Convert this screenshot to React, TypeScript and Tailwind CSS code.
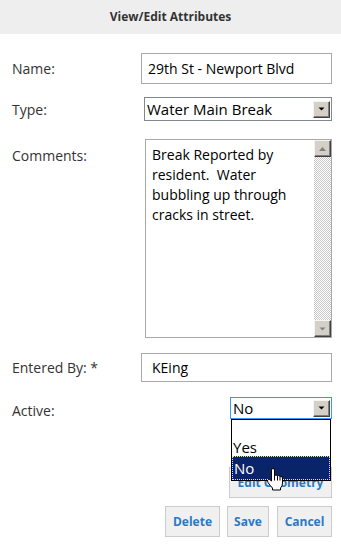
import React from "react";

function ArrowBtn({ up = false, disabled = false }: { up?: boolean; disabled?: boolean }) {
  return (
    <div className="w-[17px] h-[17px] bg-[#d4d0c8] border-t border-l border-t-[#f4f4f4] border-l-[#f4f4f4] border-r border-b border-r-[#404040] border-b-[#404040] shadow-[inset_-1px_-1px_0_#808080] flex items-center justify-center shrink-0">
      <svg width="9" height="6" viewBox="0 0 9 6">
        {up ? (
          <polygon points="1,5 8,5 4.5,1" fill={disabled ? "#808080" : "#000"} />
        ) : (
          <polygon points="1.5,1.5 7.5,1.5 4.5,4.5" fill={disabled ? "#808080" : "#000"} />
        )}
      </svg>
    </div>
  );
}

function SelectBox({ value, w, focused = false, h }: { value: string; w: string; focused?: boolean; h: string }) {
  return (
    <div
      className={`${w} ${h} ml-auto flex items-center border ${focused ? "border-[#3399ff]" : "border-[#828790]"} bg-white pl-[2px] pr-[1px]`}
    >
      <span className="flex-1 text-[15px] text-[#000] leading-none pt-[1px]">{value}</span>
      <ArrowBtn />
    </div>
  );
}

function Hand() {
  return (
    <svg width="18" height="23" viewBox="0 0 18 23" className="absolute left-[266px] top-[468px]">
      <path
        d="M5.5,2 Q5.5,0.5 7,0.5 Q8.5,0.5 8.5,2 V8 Q8.5,7 10,7 Q11.5,7 11.5,8.5 Q11.5,7.5 12.8,7.5 Q14,7.5 14,9 Q14,8.5 15,8.5 Q16.5,8.5 16.5,10 V15 Q16.5,18 14.5,20 V22 H6.5 V20 Q4,17.5 2,14.5 Q0.8,12.3 2.5,11.5 Q3.8,11 5.5,13 Z"
        fill="#fff"
        stroke="#000"
        strokeWidth="1"
      />
      <path d="M8.5,8 V12.5 M11.5,8.5 V12.5 M14,9 V12.5" stroke="#000" strokeWidth="1" fill="none" />
    </svg>
  );
}

export default function App() {
  const font = { fontFamily: '"Open Sans", "Noto Sans", sans-serif' };
  return (
    <div className="relative w-[341px] h-[547px] bg-white overflow-hidden text-[#333]" style={font}>
      <div className="h-[34px] bg-[#eeeeee] flex items-center justify-center text-[12px] font-bold text-[#333]">
        View/Edit Attributes
      </div>

      {/* Name */}
      <div className="mt-[19px] h-[31px] flex items-center pl-[12px] pr-[9px]">
        <span className="text-[14px]">Name:</span>
        <div className="ml-auto w-[191px] h-[31px] border border-[#a9a9a9] flex items-center pl-[6px] text-[14px] text-[#000]">
          29th St - Newport Blvd
        </div>
      </div>

      {/* Type */}
      <div className="mt-[13px] h-[24px] flex items-center pl-[12px] pr-[9px]">
        <span className="text-[14px] pt-[1px]">Type:</span>
        <SelectBox value="Water Main Break" w="w-[188px]" h="h-[24px]" />
      </div>

      {/* Comments */}
      <div className="mt-[18px] h-[199px] flex items-start pl-[12px] pr-[9px]">
        <span className="text-[14px] mt-[6px]">Comments:</span>
        <div className="ml-auto w-[187px] h-[199px] border border-[#a9a9a9] flex">
          <div className="flex-1 pl-[6px] pt-[5px] text-[14px] leading-[20px] text-[#000] whitespace-pre-wrap">
            {"Break Reported by\nresident.  Water\nbubbling up through\ncracks in street."}
          </div>
          <div className="w-[17px] flex flex-col">
            <ArrowBtn up disabled />
            <div className="flex-1 bg-[repeating-conic-gradient(#c8c8c8_0_25%,#ffffff_0_50%)] bg-[length:2px_2px]" />
            <ArrowBtn disabled />
          </div>
        </div>
      </div>

      {/* Entered By */}
      <div className="mt-[15px] h-[29px] flex items-center pl-[12px] pr-[9px]">
        <span className="text-[14px]">Entered By: *</span>
        <div className="ml-auto w-[191px] h-[29px] border border-[#a9a9a9] flex items-center pl-[10px] text-[14px] text-[#000]">
          KEing
        </div>
      </div>

      {/* Active */}
      <div className="mt-[15px] h-[22px] flex items-center pl-[12px] pr-[9px]">
        <span className="text-[14px] pt-[4px]">Active:</span>
        <SelectBox value="No" w="w-[102px]" h="h-[22px]" focused />
      </div>

      {/* Edit Geometry */}
      <div className="mt-[48px] flex pr-[9px]">
        <div className="ml-auto w-[103px] h-[31px] bg-[#f0f0f0] border border-[#cccccc] flex items-center justify-center text-[12px] font-bold text-[#2b78c5]">
          Edit Geometry
        </div>
      </div>

      {/* Buttons */}
      <div className="mt-[8px] flex justify-end gap-[7px] pr-[9px]">
        <div className="w-[55px] h-[31px] bg-[#f0f0f0] border border-[#cccccc] flex items-center justify-center text-[12px] font-bold text-[#2b78c5]">
          Delete
        </div>
        <div className="w-[42px] h-[31px] bg-[#f0f0f0] border border-[#cccccc] flex items-center justify-center text-[12px] font-bold text-[#2b78c5] mr-[1px]">
          Save
        </div>
        <div className="w-[55px] h-[31px] bg-[#f0f0f0] border border-[#cccccc] flex items-center justify-center text-[12px] font-bold text-[#2b78c5]">
          Cancel
        </div>
      </div>

      {/* Dropdown list overlay */}
      <div className="absolute left-[231px] top-[419px] w-[100px] h-[62px] bg-white border border-black flex flex-col text-[15px] text-[#000]">
        <div className="h-[21px]" />
        <div className="h-[19px] flex items-center pl-[1px] pt-[3px]">Yes</div>
        <div className="flex-1 bg-[#0a246a] text-white flex items-center pl-[1px] border border-dotted border-[#e8e8a0]">
          No
        </div>
      </div>

      <Hand />
    </div>
  );
}
